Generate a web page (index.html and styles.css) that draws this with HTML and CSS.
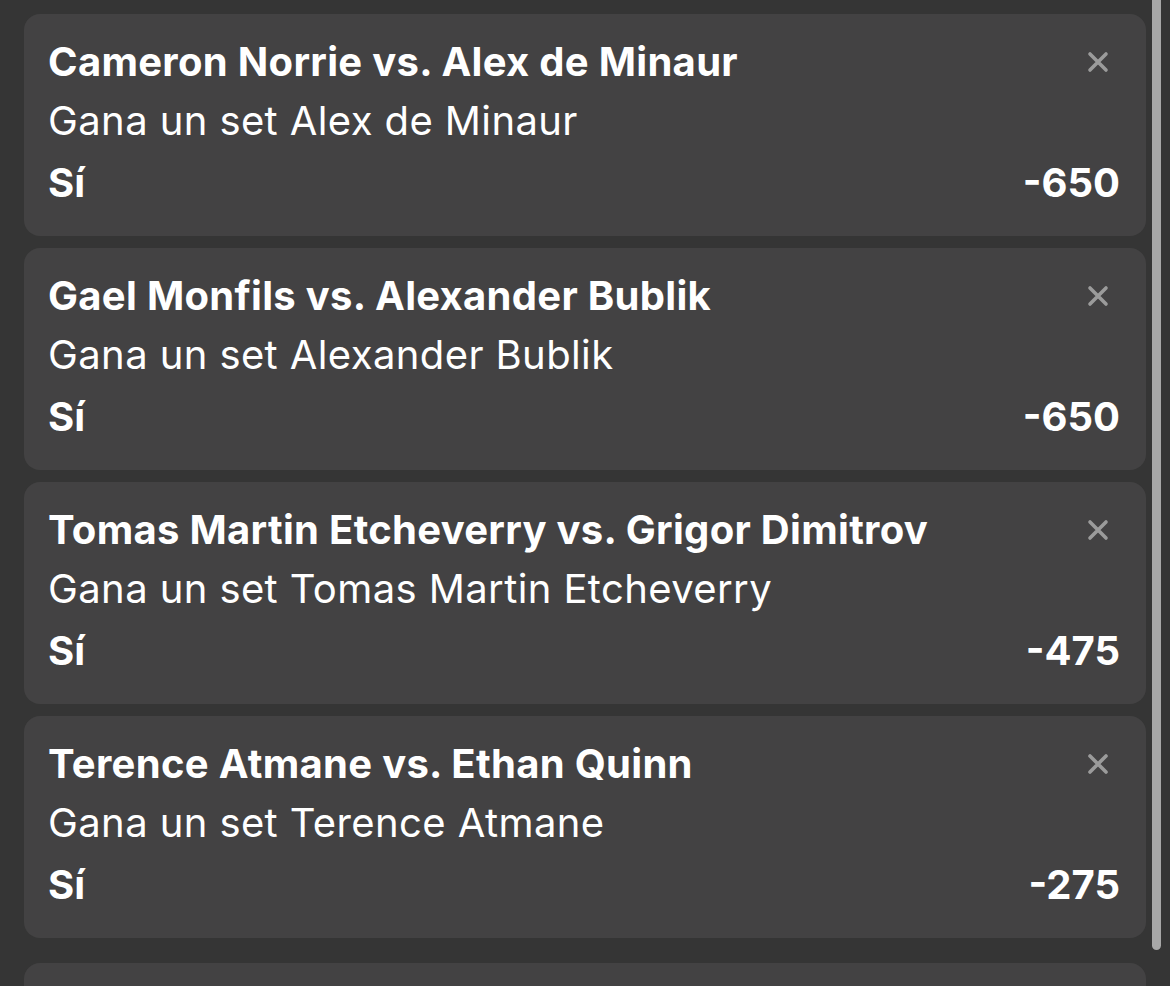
FILE: index.html
```html
<!DOCTYPE html>
<html lang="es">

<head>
    <meta charset="UTF-8">
    <meta name="viewport" content="width=device-width, initial-scale=1.0">
    <title>Boleto</title>
    <link rel="stylesheet" href="styles.css">
</head>

<body>
    <div class="bets">
        <div class="bet">
            <div class="bet-head">
                <span class="match">Cameron Norrie vs. Alex de Minaur</span>
                <button class="remove" type="button"><svg viewBox="0 0 22 22"><path d="M3 3L19 19M19 3L3 19"/></svg></button>
            </div>
            <div class="market">Gana un set Alex de Minaur</div>
            <div class="pick"><span>Sí</span><span>-650</span></div>
        </div>

        <div class="bet">
            <div class="bet-head">
                <span class="match">Gael Monfils vs. Alexander Bublik</span>
                <button class="remove" type="button"><svg viewBox="0 0 22 22"><path d="M3 3L19 19M19 3L3 19"/></svg></button>
            </div>
            <div class="market">Gana un set Alexander Bublik</div>
            <div class="pick"><span>Sí</span><span>-650</span></div>
        </div>

        <div class="bet">
            <div class="bet-head">
                <span class="match">Tomas Martin Etcheverry vs. Grigor Dimitrov</span>
                <button class="remove" type="button"><svg viewBox="0 0 22 22"><path d="M3 3L19 19M19 3L3 19"/></svg></button>
            </div>
            <div class="market">Gana un set Tomas Martin Etcheverry</div>
            <div class="pick"><span>Sí</span><span>-475</span></div>
        </div>

        <div class="bet">
            <div class="bet-head">
                <span class="match">Terence Atmane vs. Ethan Quinn</span>
                <button class="remove" type="button"><svg viewBox="0 0 22 22"><path d="M3 3L19 19M19 3L3 19"/></svg></button>
            </div>
            <div class="market">Gana un set Terence Atmane</div>
            <div class="pick"><span>Sí</span><span>-275</span></div>
        </div>

        <!-- siguiente apuesta, cortada por el borde -->
        <div class="bet next"></div>
    </div>

    <!-- barra de scroll de iOS -->
    <div class="scroll-thumb"></div>
</body>

</html>
```

FILE: styles.css
```css
body {
    margin: 0;
    height: 986px;
    overflow: hidden;
    background: #353535;
    font-family: Inter, "Noto Sans", sans-serif;
    color: #ffffff;
}

.bets {
    display: flex;
    flex-direction: column;
    gap: 12px;
    padding: 14px 24px 0 24px;
}

.bet {
    background: #434243;
    border-radius: 16px;
    padding: 18px 26px 21px 24px;
    height: 222px;
    box-sizing: border-box;
}

.bet.next {
    margin-top: 13px;
    height: 24px;
    padding: 0;
    border-radius: 16px 16px 0 0;
}

.bet-head {
    display: flex;
    justify-content: space-between;
    align-items: center;
    height: 59px;
}

.match {
    font-size: 40px;
    font-weight: 700;
    line-height: 59px;
    letter-spacing: 0.3px;
}

.remove {
    background: none;
    border: none;
    padding: 0;
    margin-right: 11px;
    width: 22px;
    height: 22px;
}

.remove svg {
    display: block;
    width: 22px;
    height: 22px;
    stroke: #9b9b9b;
    stroke-width: 3.6;
    stroke-linecap: round;
}

.market {
    font-size: 40px;
    font-weight: 400;
    line-height: 59px;
    letter-spacing: 0.4px;
}

.pick {
    display: flex;
    justify-content: space-between;
    font-size: 40px;
    font-weight: 700;
    line-height: 65px;
}

.scroll-thumb {
    position: fixed;
    top: -6px;
    right: 9px;
    width: 9px;
    height: 956px;
    border-radius: 5px;
    background: #a7a7a7;
}
```
